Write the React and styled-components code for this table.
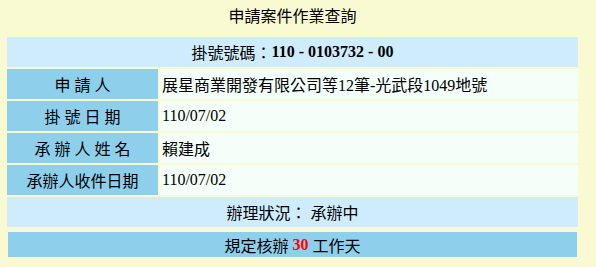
import React from "react";
import styled, { createGlobalStyle } from "styled-components";

const GlobalStyle = createGlobalStyle`
  html, body {
    margin: 0;
    padding: 0;
    background: #fafad2;
  }
  body {
    font-family: "Liberation Serif", "Noto Sans CJK TC", serif;
    font-size: 16px;
    color: #000;
  }
`;

const Page = styled.div`
  width: 571px;
  margin-left: 7px;
`;

const Title = styled.div`
  height: 30px;
  line-height: 30px;
  margin-bottom: 7px;
  text-align: center;
  font-family: "Noto Sans CJK TC", sans-serif;
  font-size: 16px;
`;

const Grid = styled.div`
  display: grid;
  grid-template-columns: 151px 1fr;
  grid-auto-rows: 30px;
  gap: 2px;
`;

const Banner = styled.div`
  grid-column: 1 / -1;
  display: flex;
  align-items: center;
  justify-content: center;
  white-space: pre;
  background: #cfecfd;
  font-weight: ${(p) => (p.$bold ? "bold" : "normal")};
`;

/* the CJK caption keeps regular weight, only the number is bold */
const Caption = styled.span`
  font-weight: normal;
`;

const Label = styled.div`
  display: flex;
  align-items: center;
  justify-content: center;
  background: #8ecfec;
  white-space: pre;
`;

const Value = styled.div`
  display: flex;
  align-items: center;
  padding-left: 2px;
  background: #f5fffa;
`;

const Footer = styled.div`
  height: 25px;
  margin: 5px 1px 0;
  display: flex;
  align-items: center;
  justify-content: center;
  white-space: pre;
  background: #8ecfec;
`;

const Days = styled.span`
  color: #ff0000;
  font-weight: bold;
`;

const rows = [
  ["申 請 人", "展星商業開發有限公司等12筆-光武段1049地號"],
  ["掛 號 日 期", "110/07/02"],
  ["承 辦 人 姓 名", "賴建成"],
  ["承辦人收件日期", "110/07/02"],
];

export default function App() {
  return (
    <>
      <GlobalStyle />
      <Page>
        <Title>申請案件作業查詢</Title>
        <Grid>
          <Banner $bold>
            <Caption>掛號號碼：</Caption>110 - 0103732 - 00
          </Banner>
          {rows.map(([label, value]) => (
            <React.Fragment key={label}>
              <Label>{label}</Label>
              <Value>{value}</Value>
            </React.Fragment>
          ))}
          <Banner>辦理狀況： 承辦中</Banner>
        </Grid>
        <Footer>
          規定核辦 <Days>30</Days> 工作天
        </Footer>
      </Page>
    </>
  );
}
